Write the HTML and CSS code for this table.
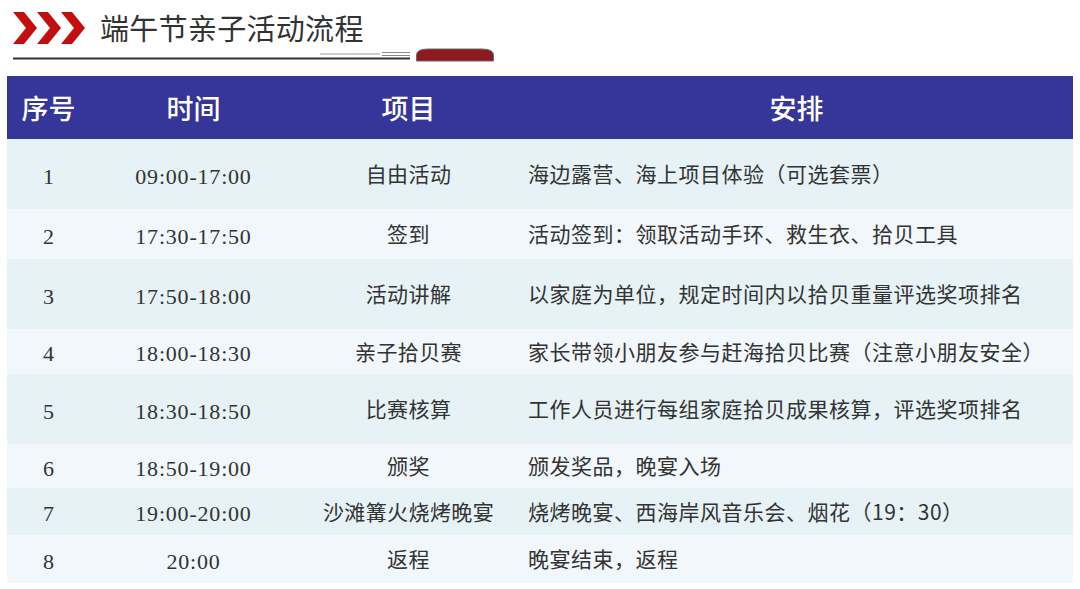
FILE: index.html
```html
<!DOCTYPE html>
<html lang="zh-CN">
<head>
<meta charset="utf-8">
<title>端午节亲子活动流程</title>
<link rel="stylesheet" href="styles.css">
</head>
<body>
<header class="top">
  <div class="title-row">
    <svg class="chevrons" width="72" height="32" viewBox="0 0 72 32" aria-hidden="true">
      <polygon points="0,0 11,0 24,16 11,32 0,32 13,16" fill="#c20e0e"/>
      <polygon points="24,0 35,0 48,16 35,32 24,32 37,16" fill="#c20e0e"/>
      <polygon points="48,0 59,0 72,16 59,32 48,32 61,16" fill="#c20e0e"/>
    </svg>
    <h1 class="title">端午节亲子活动流程</h1>
  </div>
  <svg class="deco" width="500" height="16" viewBox="0 0 500 16" aria-hidden="true">
    <line x1="13" y1="10.5" x2="410" y2="10.5" stroke="#333333" stroke-width="1.8"/>
    <line x1="320" y1="6" x2="380" y2="6" stroke="#9a9a9a" stroke-width="1"/>
    <line x1="382" y1="4.5" x2="410" y2="4.5" stroke="#8a8a8a" stroke-width="1"/>
    <line x1="382" y1="7.5" x2="410" y2="7.5" stroke="#8a8a8a" stroke-width="1"/>
    <path d="M416.5,13 L416.5,7 Q416.5,1 428,1 L482,1 Q493.5,1 493.5,7 L493.5,13 Z" fill="#8c1b20" stroke="#6b6b6b" stroke-width="1"/>
  </svg>
</header>
<main class="wrap">
  <table class="schedule">
    <colgroup>
      <col class="c-no"><col class="c-time"><col class="c-item"><col class="c-plan">
    </colgroup>
    <thead>
      <tr class="head"><th>序号</th><th>时间</th><th>项目</th><th>安排</th></tr>
    </thead>
    <tbody>
      <tr class="odd h70"><td class="num">1</td><td class="num time">09:00-17:00</td><td class="item">自由活动</td><td class="plan">海边露营、海上项目体验（可选套票）</td></tr>
      <tr class="even h50"><td class="num">2</td><td class="num time">17:30-17:50</td><td class="item">签到</td><td class="plan">活动签到：领取活动手环、救生衣、拾贝工具</td></tr>
      <tr class="odd h70"><td class="num">3</td><td class="num time">17:50-18:00</td><td class="item">活动讲解</td><td class="plan">以家庭为单位，规定时间内以拾贝重量评选奖项排名</td></tr>
      <tr class="even h45"><td class="num">4</td><td class="num time">18:00-18:30</td><td class="item">亲子拾贝赛</td><td class="plan">家长带领小朋友参与赶海拾贝比赛（注意小朋友安全）</td></tr>
      <tr class="odd h70"><td class="num">5</td><td class="num time">18:30-18:50</td><td class="item">比赛核算</td><td class="plan">工作人员进行每组家庭拾贝成果核算，评选奖项排名</td></tr>
      <tr class="even h44"><td class="num">6</td><td class="num time">18:50-19:00</td><td class="item">颁奖</td><td class="plan">颁发奖品，晚宴入场</td></tr>
      <tr class="odd h47"><td class="num">7</td><td class="num time">19:00-20:00</td><td class="item">沙滩篝火烧烤晚宴</td><td class="plan">烧烤晚宴、西海岸风音乐会、烟花（19：30）</td></tr>
      <tr class="even h48"><td class="num">8</td><td class="num time">20:00</td><td class="item">返程</td><td class="plan">晚宴结束，返程</td></tr>
    </tbody>
  </table>
</main>
</body>
</html>
```

FILE: styles.css
```css
* { box-sizing: border-box; }
html, body { margin: 0; padding: 0; background: #ffffff; }
body {
  width: 1080px;
  height: 589px;
  overflow: hidden;
  font-family: "Noto Sans CJK SC", "Noto Sans", sans-serif;
  color: #333333;
}

.top {
  height: 76px;
  display: flex;
  flex-direction: column;
}
.title-row {
  height: 48px;
  padding-top: 12px;
  padding-left: 13px;
  display: flex;
  align-items: flex-start;
}
.chevrons { display: block; flex: none; }
.title {
  margin: -5px 0 0 15px;
  font-size: 29px;
  line-height: 40px;
  font-weight: 400;
  color: #333333;
  letter-spacing: 0.3px;
}
.deco { display: block; }

.wrap { padding: 0 7px; }

.schedule {
  width: 1066px;
  border-collapse: collapse;
  table-layout: fixed;
}
.c-no { width: 83px; }
.c-time { width: 207px; }
.c-item { width: 223px; }
.c-plan { width: 553px; }

.head { height: 63px; background: #36359a; }
.head th {
  color: #ffffff;
  font-size: 27px;
  font-weight: 500;
  text-align: center;
  padding: 0;
  line-height: 1;
}

.schedule td {
  padding: 0;
  font-size: 21px;
  color: #333333;
  text-align: center;
  vertical-align: middle;
  line-height: 1.2;
}
.odd { background: #e6f2f5; }
.even { background: #f1f7fa; }
.h70 { height: 70px; }
.h50 { height: 50px; }
.h45 { height: 45px; }
.h44 { height: 44px; }
.h47 { height: 47px; }
.h48 { height: 48px; }

.schedule td.num {
  font-family: "Liberation Serif", "Noto Sans CJK SC", serif;
  font-size: 22px;
  padding-top: 6px;
}
.schedule td.time { letter-spacing: 0.8px; }
.schedule td.item { letter-spacing: 0.4px; }
.schedule td.plan {
  text-align: left;
  padding-left: 8px;
  white-space: nowrap;
  letter-spacing: 0.5px;
}
```
